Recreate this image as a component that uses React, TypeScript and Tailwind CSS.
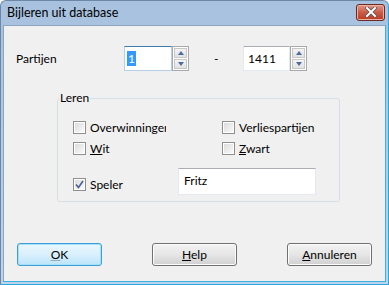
import React from "react";

const font = { fontFamily: "Lato, 'Noto Sans', 'Liberation Sans', sans-serif" };

function Spin() {
  return (
    <div className="flex flex-col w-[17px] h-[25px] border border-[#a9a9a9] bg-white p-[1px] gap-[1px]">
      <div className="flex-1 flex items-center justify-center border border-[#c7c7c7] bg-gradient-to-b from-[#f4f4f4] to-[#e2e2e2]">
        <div className="w-0 h-0 border-l-[3.5px] border-r-[3.5px] border-b-[4px] border-l-transparent border-r-transparent border-b-[#4e6a9e]" />
      </div>
      <div className="flex-1 flex items-center justify-center border border-[#c7c7c7] bg-gradient-to-b from-[#f4f4f4] to-[#e2e2e2]">
        <div className="w-0 h-0 border-l-[3.5px] border-r-[3.5px] border-t-[4px] border-l-transparent border-r-transparent border-t-[#4e6a9e]" />
      </div>
    </div>
  );
}

function Check({ checked }: { checked?: boolean }) {
  return (
    <div className="w-[13px] h-[13px] border border-[#8f8f8f] bg-white p-[1px] shrink-0">
      <div className="w-full h-full bg-gradient-to-br from-[#dcdcdc] to-[#f9f9f9] flex items-center justify-center">
        {checked && (
          <svg width="9" height="9" viewBox="0 0 9 9">
            <path d="M1 4.5 L3.5 7.5 L8 1" stroke="#4a5f97" strokeWidth="1.6" fill="none" />
          </svg>
        )}
      </div>
    </div>
  );
}

function Btn({ children, def }: { children: React.ReactNode; def?: boolean }) {
  return (
    <div
      className={
        "w-[85px] h-[23px] rounded-[3px] flex items-center justify-center text-[12px] text-black border " +
        (def
          ? "border-[#3c9fd8] bg-gradient-to-b from-[#eaf6fd] via-[#d9f0fc] to-[#bce4fa] shadow-[inset_0_0_0_1px_#a6e0fb]"
          : "border-[#707070] bg-gradient-to-b from-[#f2f2f2] via-[#e6e6e6] to-[#d0d0d0] shadow-[inset_0_0_0_1px_#fcfcfc]")
      }
    >
      {children}
    </div>
  );
}

export default function App() {
  return (
    <div
      className="w-[389px] h-[285px] flex flex-col bg-gradient-to-b from-[#a7c1de] to-[#bcd4ec] rounded-t-[6px] border border-[#6c87a6] border-b-[#2da6dc] border-r-[#2da6dc] overflow-hidden"
      style={font}
    >
      <div className="h-[24px] flex items-center justify-between pl-[6px] pr-[3px] shrink-0">
        <span className="text-[12.5px] text-black">Bijleren uit database</span>
        <div className="w-[29px] h-[17px] mt-[-2px] rounded-[3px] border border-[#6a2b22] bg-gradient-to-b from-[#e0978a] via-[#cb5a45] to-[#b83a24] flex items-center justify-center shadow-[inset_0_0_0_1px_#ecb1a5]">
          <svg width="12" height="10" viewBox="0 0 12 10">
            <path d="M2 1 L10 9 M10 1 L2 9" stroke="#555" strokeWidth="3.6" strokeLinecap="square" />
            <path d="M2 1 L10 9 M10 1 L2 9" stroke="#fff" strokeWidth="2" strokeLinecap="square" />
          </svg>
        </div>
      </div>
      <div className="flex-1 flex mx-[2px] mb-[2px]">
        <div className="flex-1 bg-[#f0f0f0] border border-[#8ba4c0] border-b-[#3bb0e0] border-r-[#3bb0e0] text-[12px] text-black flex flex-col">
          {/* Row 1 */}
          <div className="flex items-center mt-[20px] h-[25px]">
            <span className="w-[120px] pl-[12px]">Partijen</span>
            <div className="w-[48px] h-[25px] bg-white border border-[#b5cfe7] border-t-[#3d7bad] border-l-[#b5cfe7] flex items-center pl-[2px]">
              <span className="bg-[#3399ff] text-white px-[1px] leading-[15px]">1</span>
            </div>
            <Spin />
            <span className="w-[54px] pl-[25px]">-</span>
            <div className="w-[47px] h-[25px] bg-white border border-[#e3e9ef] border-t-[#abadb3] flex items-center pl-[4px]">
              1411
            </div>
            <Spin />
          </div>
          {/* Group */}
          <div className="relative ml-[53px] mt-[27px] w-[283px] h-[104px] border border-[#d5dfe5] rounded-[3px]">
            <span className="absolute left-[1px] top-[-8px] bg-[#f0f0f0] px-[1px] leading-[14px]">Leren</span>
            <div className="flex flex-col pl-[15px] pt-[22px]">
              <div className="flex h-[13px] items-center">
                <div className="w-[149px] flex items-center gap-[4px]">
                  <Check />
                  <span className="w-[76px] overflow-hidden whitespace-nowrap">Overwinningen</span>
                </div>
                <div className="flex items-center gap-[4px]">
                  <Check />
                  <span>Verliespartijen</span>
                </div>
              </div>
              <div className="flex h-[13px] items-center mt-[8px]">
                <div className="w-[149px] flex items-center gap-[4px]">
                  <Check />
                  <span><span className="underline">W</span>it</span>
                </div>
                <div className="flex items-center gap-[4px]">
                  <Check />
                  <span><span className="underline">Z</span>wart</span>
                </div>
              </div>
              <div className="flex items-center mt-[13px] h-[27px]">
                <div className="w-[105px] flex items-center gap-[4px] mt-[6px]">
                  <Check checked />
                  <span>Speler</span>
                </div>
                <div className="w-[138px] h-[27px] bg-white border border-[#e3e9ef] border-t-[#abadb3] pl-[5px] pt-[3px]">
                  Fritz
                </div>
              </div>
            </div>
          </div>
          {/* Buttons */}
          <div className="flex items-center mt-[41px] pl-[13px] gap-[50px]">
            <Btn def>
              <span><span className="underline decoration-[#9ab]">O</span>K</span>
            </Btn>
            <Btn>
              <span><span className="underline">H</span>elp</span>
            </Btn>
            <Btn>
              <span><span className="underline">A</span>nnuleren</span>
            </Btn>
          </div>
        </div>
      </div>
    </div>
  );
}
